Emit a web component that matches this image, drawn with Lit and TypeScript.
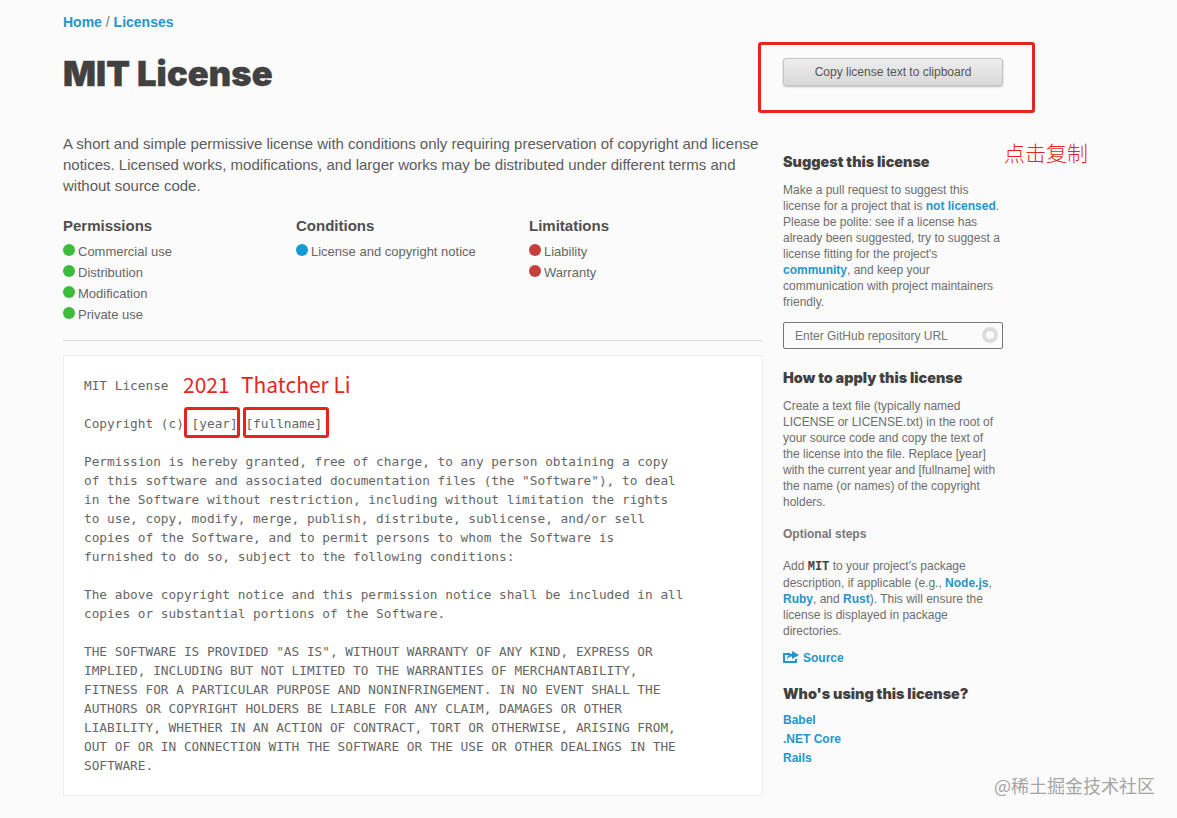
import { html, LitElement, css, svg } from "lit";
import { customElement } from "lit/decorators.js";
import { map } from "lit/directives/map.js";

const shareIcon = svg`<path d="M0 2h7v2H2v6h10V8h2v4H0z"/><path d="M9 0l7 4-7 4V5.5C6.5 5.5 4.5 7 4 9c0-4 2-6 5-6.5z"/>`;

const licenseText = `MIT License

Copyright (c) [year] [fullname]

Permission is hereby granted, free of charge, to any person obtaining a copy
of this software and associated documentation files (the "Software"), to deal
in the Software without restriction, including without limitation the rights
to use, copy, modify, merge, publish, distribute, sublicense, and/or sell
copies of the Software, and to permit persons to whom the Software is
furnished to do so, subject to the following conditions:

The above copyright notice and this permission notice shall be included in all
copies or substantial portions of the Software.

THE SOFTWARE IS PROVIDED "AS IS", WITHOUT WARRANTY OF ANY KIND, EXPRESS OR
IMPLIED, INCLUDING BUT NOT LIMITED TO THE WARRANTIES OF MERCHANTABILITY,
FITNESS FOR A PARTICULAR PURPOSE AND NONINFRINGEMENT. IN NO EVENT SHALL THE
AUTHORS OR COPYRIGHT HOLDERS BE LIABLE FOR ANY CLAIM, DAMAGES OR OTHER
LIABILITY, WHETHER IN AN ACTION OF CONTRACT, TORT OR OTHERWISE, ARISING FROM,
OUT OF OR IN CONNECTION WITH THE SOFTWARE OR THE USE OR OTHER DEALINGS IN THE
SOFTWARE.`;

const rules = [
  {
    title: "Permissions",
    color: "green",
    items: ["Commercial use", "Distribution", "Modification", "Private use"],
  },
  { title: "Conditions", color: "blue", items: ["License and copyright notice"] },
  { title: "Limitations", color: "red", items: ["Liability", "Warranty"] },
];

@customElement("app-root")
export class AppRoot extends LitElement {
  static styles = css`
    :host {
      display: block;
      position: relative;
      height: 818px;
      overflow: hidden;
      background: #fbfbfb;
      color: #5a5a5a;
      font-family: "Liberation Sans", Arial, sans-serif;
    }

    a {
      color: #2496cc;
      font-weight: 700;
      text-decoration: none;
    }

    .page {
      display: grid;
      grid-template-columns: 700px 220px;
      column-gap: 20px;
      padding: 14px 0 0 63px;
    }

    .breadcrumb {
      font-size: 14px;
      line-height: 16px;
      color: #777;
    }

    h1 {
      margin: 22px 0 0;
      font-family: Inter, "Liberation Sans", sans-serif;
      font-size: 34.5px;
      font-weight: 900;
      line-height: 44px;
      letter-spacing: 0.1px;
      -webkit-text-stroke: 0.4px #414141;
      color: #414141;
    }

    .intro {
      margin: 37px 0 0;
      font-size: 15px;
      line-height: 21px;
      color: #5c5c5c;
    }

    .rules {
      display: grid;
      grid-template-columns: repeat(3, 233px);
      margin-top: 19px;
      padding-bottom: 15px;
      border-bottom: 1px solid #ddd;
    }

    .rules h3 {
      margin: 0 0 5px;
      font-size: 15px;
      font-weight: 700;
      line-height: 21px;
      color: #4f4f4f;
    }

    .rule {
      display: flex;
      align-items: center;
      gap: 3px;
      font-size: 13px;
      line-height: 21px;
      color: #666;
    }

    .dot {
      width: 12px;
      height: 12px;
      border-radius: 50%;
      margin-top: -3px;
    }

    .dot.green {
      background: #3dbb3d;
    }
    .dot.blue {
      background: #149ad4;
    }
    .dot.red {
      background: #c5403c;
    }

    .license {
      margin: 14px 0 0;
      padding: 20px;
      height: 399px;
      background: #fff;
      border: 1px solid #eee;
      font-family: "DejaVu Sans Mono", monospace;
      font-size: 12.78px;
      line-height: 19px;
      color: #666;
      white-space: pre;
    }

    aside {
      font-size: 12px;
      line-height: 16px;
      color: #6e6e6e;
    }

    .copy {
      display: block;
      width: 220px;
      height: 28px;
      margin-top: 44px;
      padding: 0;
      border: 1px solid #c4c4c4;
      border-radius: 3px;
      background: linear-gradient(#eee, #d8d8d8);
      box-shadow: 0 1px 2px rgba(0, 0, 0, 0.25);
      font: 12px "Liberation Sans", Arial, sans-serif;
      color: #555;
    }

    aside h3 {
      margin: 0;
      font-family: Inter, "Liberation Sans", sans-serif;
      font-size: 14.4px;
      font-weight: 900;
      line-height: 20px;
      color: #414141;
    }

    aside p {
      margin: 0;
    }

    .suggest {
      margin-top: 66px;
    }

    .suggest h3,
    .apply h3 {
      margin-bottom: 10px;
    }

    .repo {
      position: relative;
      display: flex;
      align-items: center;
      height: 25px;
      margin: 12px 0 19px;
      padding-left: 11px;
      border: 1px solid #777;
      border-radius: 2px;
      color: #757575;
    }

    .spinner {
      position: absolute;
      right: 4px;
      top: 4px;
      box-sizing: border-box;
      width: 16px;
      height: 16px;
      border: 4px solid #ddd;
      border-radius: 50%;
    }

    .optional {
      margin: 16px 0;
      font-weight: 700;
      color: #777;
    }

    code {
      font-family: "Liberation Mono", monospace;
      font-weight: 700;
      color: #444;
    }

    .source {
      display: flex;
      align-items: center;
      gap: 4px;
      margin: 11px 0 18px;
    }

    .source svg {
      width: 16px;
      height: 12px;
      margin-top: -3px;
      fill: #2496cc;
    }

    .users {
      display: grid;
      margin-top: 8px;
      gap: 3px;
    }

    .mark {
      position: absolute;
      box-sizing: border-box;
      border: 3px solid #e8251c;
      border-radius: 3px;
    }

    .mark.copy-mark {
      left: 758px;
      top: 42px;
      width: 277px;
      height: 71px;
    }

    .mark.year {
      left: 184px;
      top: 407px;
      width: 56px;
      height: 31px;
    }

    .mark.fullname {
      left: 243px;
      top: 407px;
      width: 86px;
      height: 31px;
    }

    .note {
      position: absolute;
      font-family: "Noto Sans CJK SC", "Noto Sans", sans-serif;
      font-size: 21px;
      line-height: 28px;
      color: #e8251c;
      white-space: nowrap;
    }

    .note.click {
      left: 1004px;
      top: 138px;
      font-weight: 300;
    }

    .note.year-value {
      left: 183px;
      top: 370px;
    }

    .note.name-value {
      left: 241px;
      top: 370px;
    }

    .watermark {
      position: absolute;
      left: 994px;
      top: 773px;
      font-family: "Noto Sans CJK SC", sans-serif;
      font-size: 18px;
      line-height: 24px;
      color: #a5a5a5;
      white-space: nowrap;
    }
  `;

  render() {
    return html`<div class="page">
        <main>
          <div class="breadcrumb">
            <a href="#">Home</a> / <a href="#">Licenses</a>
          </div>
          <h1>MIT License</h1>
          <p class="intro">
            A short and simple permissive license with conditions only requiring
            preservation of copyright and license notices. Licensed works,
            modifications, and larger works may be distributed under different
            terms and without source code.
          </p>
          <div class="rules">
            ${map(
              rules,
              (group) => html`<div>
                <h3>${group.title}</h3>
                ${map(
                  group.items,
                  (item) => html`<div class="rule">
                    <span class="dot ${group.color}"></span>${item}
                  </div>`
                )}
              </div>`
            )}
          </div>
          <div class="license">${licenseText}</div>
        </main>
        <aside>
          <button class="copy">Copy license text to clipboard</button>
          <section class="suggest">
            <h3>Suggest this license</h3>
            <p>
              Make a pull request to suggest this license for a project that is
              <a href="#">not licensed</a>. Please be polite: see if a license
              has already been suggested, try to suggest a license fitting for
              the project's <a href="#">community</a>, and keep your
              communication with project maintainers friendly.
            </p>
            <div class="repo">
              Enter GitHub repository URL<span class="spinner"></span>
            </div>
          </section>
          <section class="apply">
            <h3>How to apply this license</h3>
            <p>
              Create a text file (typically named LICENSE or LICENSE.txt) in the
              root of your source code and copy the text of the license into the
              file. Replace [year] with the current year and [fullname] with the
              name (or names) of the copyright holders.
            </p>
            <p class="optional">Optional steps</p>
            <p>
              Add <code>MIT</code> to your project's package description, if
              applicable (e.g., <a href="#">Node.js</a>, <a href="#">Ruby</a>,
              and <a href="#">Rust</a>). This will ensure the license is
              displayed in package directories.
            </p>
            <a class="source" href="#"
              ><svg viewBox="0 0 16 12" aria-hidden="true">${shareIcon}</svg>
              Source</a
            >
          </section>
          <section>
            <h3>Who's using this license?</h3>
            <div class="users">
              <a href="#">Babel</a>
              <a href="#">.NET Core</a>
              <a href="#">Rails</a>
            </div>
          </section>
        </aside>
      </div>
      <span class="mark copy-mark"></span>
      <span class="mark year"></span>
      <span class="mark fullname"></span>
      <span class="note click">点击复制</span>
      <span class="note year-value">2021</span>
      <span class="note name-value">Thatcher Li</span>
      <span class="watermark">@稀土掘金技术社区</span>`;
  }
}

declare global {
  interface HTMLElementTagNameMap {
    "app-root": AppRoot;
  }
}
